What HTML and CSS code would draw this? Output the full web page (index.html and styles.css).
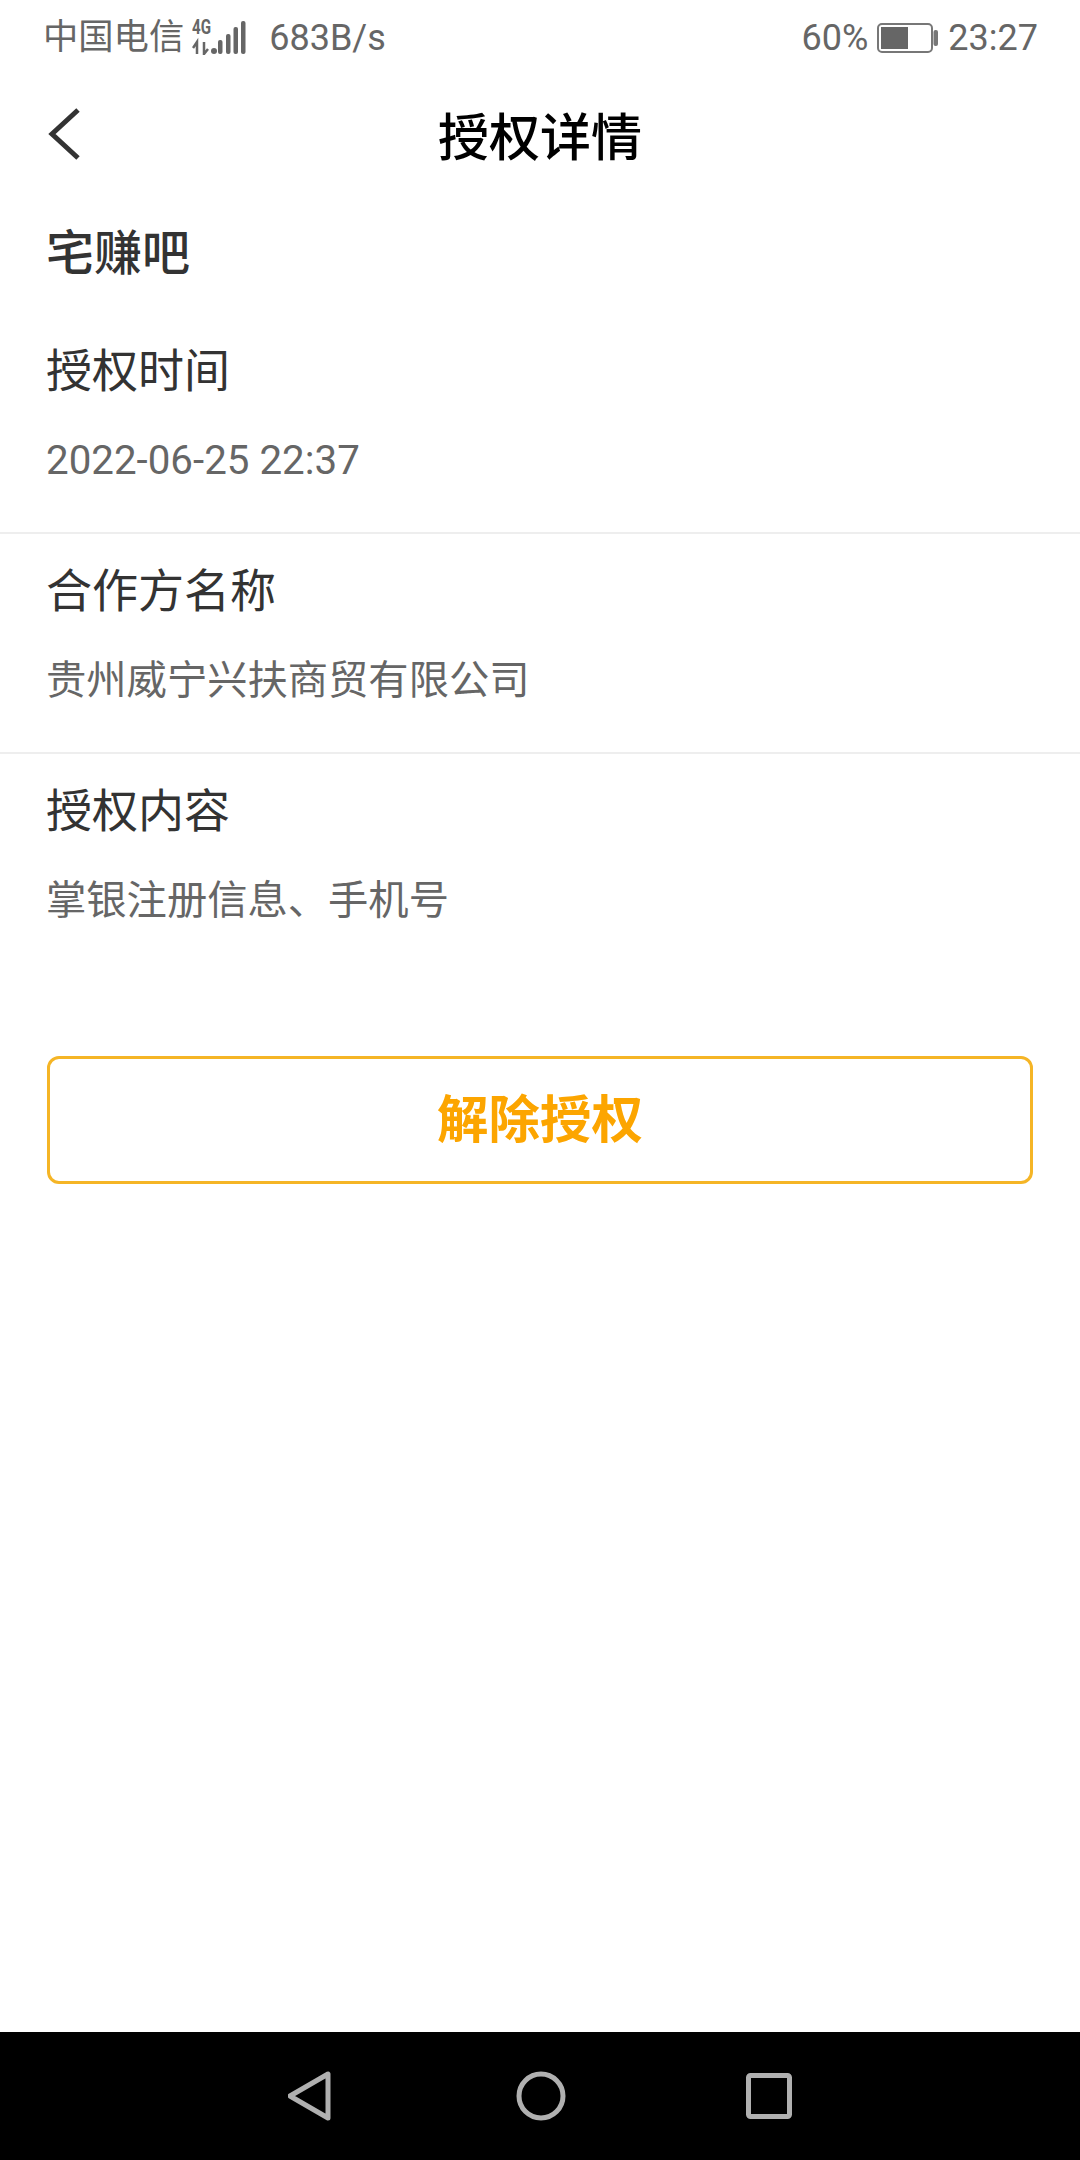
FILE: index.html
```html
<!DOCTYPE html>
<html lang="zh-CN">
<head>
    <meta charset="UTF-8">
    <meta name="viewport" content="width=device-width, initial-scale=1.0">
    <title>授权详情</title>
    <link rel="stylesheet" href="styles.css">
</head>
<body>
    <div class="screen">
        <div class="status-bar">
            <div class="status-left">
                <span class="carrier">中国电信</span>
                <svg class="signal-icon" width="54" height="42" viewBox="0 -6 54 42">
                    <text x="0" y="15" class="signal-4g" textLength="19" lengthAdjust="spacingAndGlyphs">4G</text>
                    <path d="M5 35V23L1 29M12 23V35L16 30" fill="none" stroke="#666" stroke-width="2.500"/>
                    <circle cx="22" cy="32" r="3" fill="#666"/>
                    <rect x="26" y="21" width="4.500" height="14" rx="2" fill="#666"/>
                    <rect x="34" y="15" width="4.500" height="20" rx="2" fill="#666"/>
                    <rect x="41.500" y="8" width="4.500" height="27" rx="2" fill="#666"/>
                    <rect x="49" y="2" width="4.500" height="33" rx="2" fill="#666"/>
                </svg>
                <span class="speed">683B/s</span>
            </div>
            <div class="status-right">
                <span class="percent">60%</span>
                <svg class="battery-icon" width="61" height="30" viewBox="0 0 61 30">
                    <rect x="1" y="1" width="54" height="28" rx="4" fill="none" stroke="#777" stroke-width="2"/>
                    <rect x="4" y="4" width="27" height="22" fill="#666"/>
                    <rect x="56.500" y="7" width="4.500" height="16" rx="2" fill="#777"/>
                </svg>
                <span class="clock">23:27</span>
            </div>
        </div>

        <div class="nav-bar">
            <svg class="back-icon" width="36" height="54" viewBox="0 0 36 54">
                <path d="M32 3 L6 27 L32 51" fill="none" stroke="#333" stroke-width="5"/>
            </svg>
            <h1 class="page-title">授权详情</h1>
        </div>

        <div class="app-name">宅赚吧</div>

        <div class="info-block">
            <div class="info-label">授权时间</div>
            <div class="info-value">2022-06-25 22:37</div>
        </div>
        <div class="info-block">
            <div class="info-label">合作方名称</div>
            <div class="info-value">贵州威宁兴扶商贸有限公司</div>
        </div>
        <div class="info-block last">
            <div class="info-label">授权内容</div>
            <div class="info-value">掌银注册信息、手机号</div>
        </div>

        <button class="revoke-button">解除授权</button>

        <div class="spacer"></div>

        <div class="system-nav">
            <svg width="48" height="54" viewBox="0 0 48 54">
                <path d="M40 5 V49 L2 27 Z" fill="none" stroke="#b0b0b0" stroke-width="5" stroke-linejoin="round"/>
            </svg>
            <svg width="50" height="50" viewBox="0 0 50 50">
                <circle cx="25" cy="25" r="22" fill="none" stroke="#b0b0b0" stroke-width="5"/>
            </svg>
            <svg width="46" height="46" viewBox="0 0 46 46">
                <rect x="2.500" y="2.500" width="41" height="41" rx="2" fill="none" stroke="#b0b0b0" stroke-width="5"/>
            </svg>
        </div>
    </div>
</body>
</html>
```

FILE: styles.css
```css
* {
    box-sizing: border-box;
}

body {
    margin: 0;
    background-color: #fff;
    font-family: Roboto, "Noto Sans CJK SC", sans-serif;
}

.screen {
    width: 1080px;
    height: 2160px;
    display: flex;
    flex-direction: column;
}

.status-bar {
    height: 76px;
    padding: 0 42px 0 43px;
    display: flex;
    justify-content: space-between;
    align-items: center;
    color: #666;
    font-size: 36px;
}

.status-left,
.status-right {
    display: flex;
    align-items: center;
}

.carrier {
    font-size: 35.300px;
    line-height: 40px;
    padding-bottom: 2px;
}

.signal-icon {
    margin-left: 8px;
    margin-bottom: 9px;
}

.signal-4g {
    font-size: 21px;
    font-weight: bold;
    fill: #666;
}

.speed {
    margin-left: 23px;
}

.battery-icon {
    margin: 0 10px 0 9px;
}

.nav-bar {
    height: 120px;
    padding: 0 0 4px 46px;
    display: flex;
    align-items: center;
    position: relative;
}

.page-title {
    position: absolute;
    left: 0;
    right: 0;
    margin: 0;
    text-align: center;
    font-size: 51px;
    font-weight: 500;
    color: #000;
}

.app-name {
    padding: 28px 46px 30px;
    font-size: 48px;
    font-weight: 500;
    line-height: 60px;
    color: #333;
}

.info-block {
    height: 220px;
    padding: 0 46px;
    border-bottom: 2px solid #eee;
}

.info-block.last {
    height: 302px;
    border-bottom: none;
}

.info-label {
    padding-top: 27px;
    font-size: 46px;
    line-height: 60px;
    color: #333;
}

.info-value {
    padding-top: 30px;
    font-size: 40.300px;
    line-height: 60px;
    color: #666;
}

.revoke-button {
    display: block;
    width: 986px;
    height: 128px;
    margin: 0 0 0 47px;
    padding: 0 0 9px;
    background: #fff;
    border: 3px solid #f5b526;
    border-radius: 12px;
    font-family: inherit;
    font-size: 51.500px;
    font-weight: 700;
    color: #fca500;
}

.spacer {
    flex: 1;
}

.system-nav {
    height: 128px;
    background: #000;
    display: flex;
    align-items: center;
    justify-content: center;
    gap: 180px;
}
```
